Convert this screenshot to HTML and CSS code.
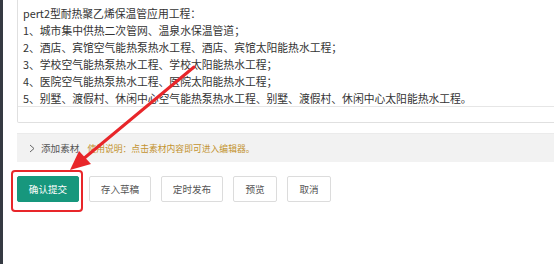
FILE: index.html
```html
<!DOCTYPE html>
<html lang="zh-CN">
  <head>
    <meta charset="UTF-8" />
    <meta name="viewport" content="width=device-width, initial-scale=1.0" />
    <title>发布</title>
    <link rel="stylesheet" href="styles.css">
  </head>
  <body>
    <div class="page">
      <div class="side"></div>
      <div class="main">
        <div class="editor">
          <div class="content">
            <p>pert2型耐热聚乙烯保温管应用工程：</p>
            <p>1、城市集中供热二次管网、温泉水保温管道；</p>
            <p>2、酒店、宾馆空气能热泵热水工程、酒店、宾馆太阳能热水工程；</p>
            <p>3、学校空气能热泵热水工程、学校太阳能热水工程；</p>
            <p>4、医院空气能热泵热水工程、医院太阳能热水工程；</p>
            <p>5、别墅、渡假村、休闲中心空气能热泵热水工程、别墅、渡假村、休闲中心太阳能热水工程。</p>
          </div>
          <div class="status"></div>
        </div>
        <div class="material">
          <svg class="chev" width="6" height="9" viewBox="0 0 6 9"><polyline points="1,1 5,4.5 1,8" fill="none" stroke="#666" stroke-width="1"/></svg>
          <span class="mat-title">添加素材</span>
          <span class="mat-tip">使用说明：点击素材内容即可进入编辑器。</span>
        </div>
        <div class="actions">
          <button class="btn btn-primary">确认提交</button>
          <button class="btn">存入草稿</button>
          <button class="btn">定时发布</button>
          <button class="btn btn-sm">预览</button>
          <button class="btn btn-sm">取消</button>
        </div>
      </div>
    </div>
    <!-- 标注 -->
    <svg class="mark" width="554" height="264" viewBox="0 0 554 264">
      <rect x="12" y="171" width="70" height="40" rx="3" fill="none" stroke="#e8262a" stroke-width="2"/>
      <line x1="194" y1="67" x2="82" y2="160" stroke="#e8262a" stroke-width="3" stroke-linecap="round"/>
      <polygon points="70,170 79,151 91,164" fill="#e8262a"/>
    </svg>
  </body>
</html>
```

FILE: styles.css
```css
* {
  margin: 0;
  padding: 0;
  box-sizing: border-box;
}
body {
  background: #fff;
  font-family: "Noto Sans CJK SC", "Liberation Sans", sans-serif;
  overflow: hidden;
}
.page {
  display: flex;
  height: 264px;
}
.side {
  width: 3px;
  background: #353a42;
}
.main {
  flex: 1;
  padding-left: 14px;
  margin-right: -20px;
}
.editor {
  border: 1px solid #e0e0e0;
  border-top: none;
  border-radius: 0 0 2px 2px;
}
.content {
  height: 106px;
  overflow: hidden;
  padding: 5px 0 0 5px;
  font-size: 10.8px;
  line-height: 17px;
  color: #333;
}
.status {
  height: 16px;
  border-top: 1px solid #e6e6e6;
}
.material {
  margin-top: 10px;
  height: 29px;
  background: #f2f2f2;
  border-top: 1px solid #ebebeb;
  display: flex;
  align-items: center;
  padding-left: 12px;
}
.chev {
  margin-right: 6px;
}
.mat-title {
  font-size: 9.6px;
  color: #555;
  margin-right: 8px;
}
.mat-tip {
  font-size: 8.8px;
  color: #c39330;
}
.actions {
  display: flex;
  gap: 10px;
  margin-top: 14px;
}
.btn {
  width: 62px;
  height: 26px;
  border: 1px solid #dcdcdc;
  border-radius: 2px;
  background: #fff;
  color: #555;
  font-family: inherit;
  font-size: 9.6px;
}
.btn-sm {
  width: 44px;
}
.btn-primary {
  background: #17977d;
  border-color: #17977d;
  color: #fff;
}
.mark {
  position: absolute;
  left: 0;
  top: 0;
  pointer-events: none;
}
```
